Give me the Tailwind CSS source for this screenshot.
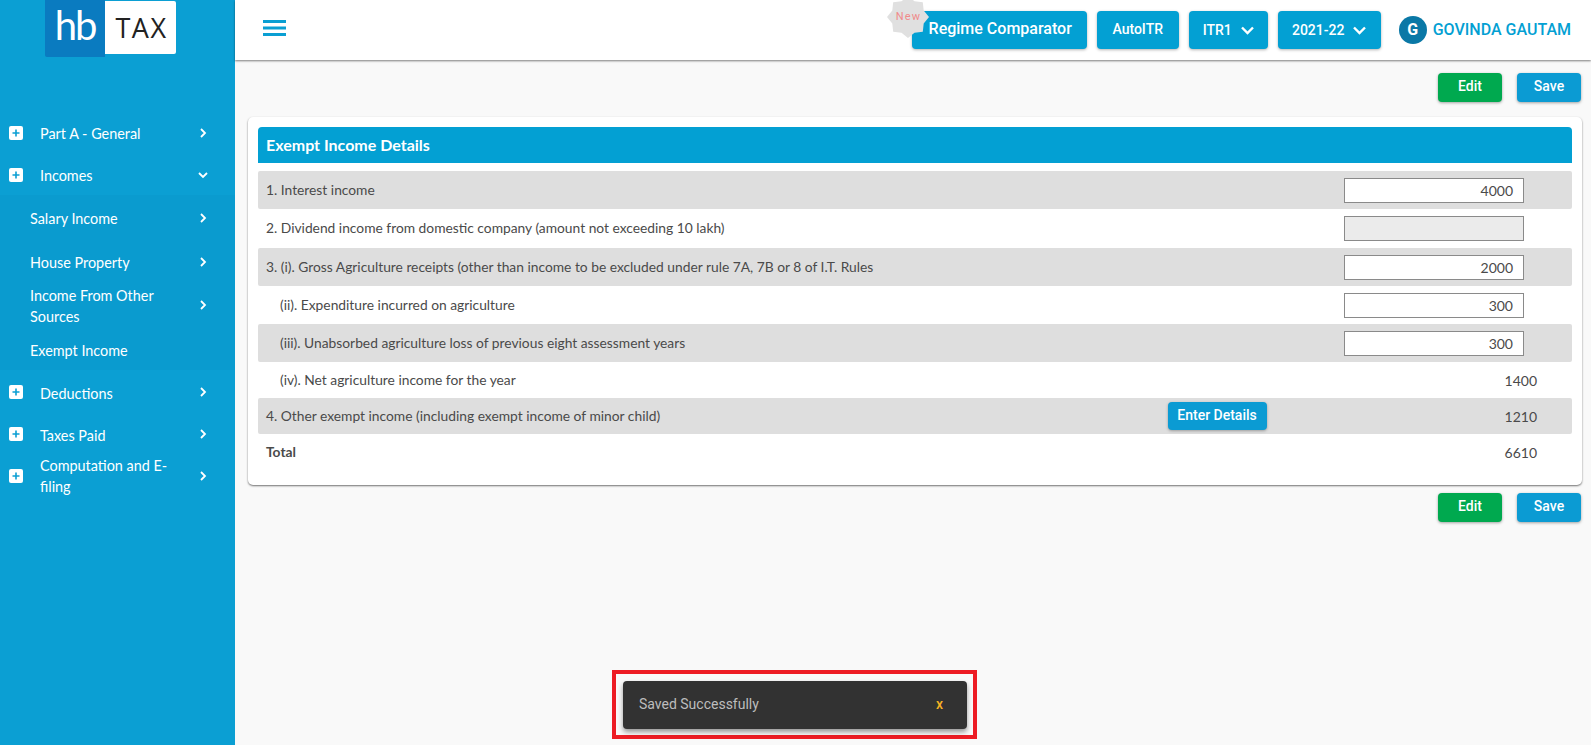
<!DOCTYPE html>
<html>
<head>
<meta charset="utf-8">
<script src="https://cdn.jsdelivr.net/npm/@tailwindcss/browser@4"></script>
</head>
<body class="font-['Lato','Liberation_Sans',sans-serif] bg-[#f9f9f9] overflow-hidden">
<div class="relative flex h-[745px] w-[1591px] overflow-hidden">
  <!-- Sidebar -->
  <aside class="w-[235px] shrink-0 bg-[#0b9fd3] text-white text-[14.4px] leading-[21px]">
    <div class="h-[112px] pl-[45px]">
      <div class="flex items-start">
        <div class="w-[60px] h-[57px] bg-[#0a7bc0] rounded-bl-[2px] flex items-center justify-center text-[40px] leading-none tracking-[-2px] pb-[7px]">hb</div>
        <div class="mt-[1px] w-[71px] h-[53px] bg-white rounded-r-[2px] flex items-center justify-center pl-[2px] text-[27px] leading-none tracking-[1.5px] text-[#222] font-['Open_Sans',sans-serif]">TAX</div>
      </div>
    </div>
    <nav>
      <div class="flex items-center h-[42px] pl-[9px] pr-[27px]">
        <span class="w-[14px] h-[14px] rounded-[2px] bg-white text-[#0b9fd3] flex items-center justify-center"><svg width="8" height="8" viewBox="0 0 8 8"><path d="M4 .5v7M.5 4h7" stroke="currentColor" stroke-width="1.6"/></svg></span>
        <span class="ml-[17px] flex-1 pt-[1px]">Part A - General</span>
        <svg width="10" height="10" viewBox="0 0 10 10" fill="none" stroke="white" stroke-width="1.8"><path d="M3 1l4 4-4 4"/></svg>
      </div>
      <div class="flex items-center h-[42px] pl-[9px] pr-[19px] border-b border-[#0a93c4] mr-[8px] -mb-px">
        <span class="w-[14px] h-[14px] rounded-[2px] bg-white text-[#0b9fd3] flex items-center justify-center"><svg width="8" height="8" viewBox="0 0 8 8"><path d="M4 .5v7M.5 4h7" stroke="currentColor" stroke-width="1.6"/></svg></span>
        <span class="ml-[17px] flex-1 pt-[2px]">Incomes</span>
        <svg width="10" height="10" viewBox="0 0 10 10" fill="none" stroke="white" stroke-width="1.8"><path d="M1 3l4 4 4-4"/></svg>
      </div>
      <div class="bg-[#0a9bcf] pt-[1px]">
        <div class="flex items-center h-[44px] pl-[30px] pr-[27px]"><span class="flex-1">Salary Income</span><svg width="10" height="10" viewBox="0 0 10 10" fill="none" stroke="white" stroke-width="1.8"><path d="M3 1l4 4-4 4"/></svg></div>
        <div class="flex items-center h-[44px] pl-[30px] pr-[27px]"><span class="flex-1">House Property</span><svg width="10" height="10" viewBox="0 0 10 10" fill="none" stroke="white" stroke-width="1.8"><path d="M3 1l4 4-4 4"/></svg></div>
        <div class="flex items-center h-[42px] pl-[30px] pr-[27px]"><span class="flex-1 pt-[1px] leading-[21px]">Income From Other<br>Sources</span><svg width="10" height="10" viewBox="0 0 10 10" fill="none" stroke="white" stroke-width="1.8"><path d="M3 1l4 4-4 4"/></svg></div>
        <div class="flex items-center h-[44px] pt-[4px] pl-[30px] pr-[27px]"><span class="flex-1">Exempt Income</span></div>
      </div>
      <div class="flex items-center h-[42px] mt-[1px] pl-[9px] pr-[27px]">
        <span class="w-[14px] h-[14px] rounded-[2px] bg-white text-[#0b9fd3] flex items-center justify-center"><svg width="8" height="8" viewBox="0 0 8 8"><path d="M4 .5v7M.5 4h7" stroke="currentColor" stroke-width="1.6"/></svg></span>
        <span class="ml-[17px] flex-1 pt-[2px]">Deductions</span>
        <svg width="10" height="10" viewBox="0 0 10 10" fill="none" stroke="white" stroke-width="1.8"><path d="M3 1l4 4-4 4"/></svg>
      </div>
      <div class="flex items-center h-[42px] pl-[9px] pr-[27px]">
        <span class="w-[14px] h-[14px] rounded-[2px] bg-white text-[#0b9fd3] flex items-center justify-center"><svg width="8" height="8" viewBox="0 0 8 8"><path d="M4 .5v7M.5 4h7" stroke="currentColor" stroke-width="1.6"/></svg></span>
        <span class="ml-[17px] flex-1 pt-[2px]">Taxes Paid</span>
        <svg width="10" height="10" viewBox="0 0 10 10" fill="none" stroke="white" stroke-width="1.8"><path d="M3 1l4 4-4 4"/></svg>
      </div>
      <div class="flex items-center h-[42px] pl-[9px] pr-[27px]">
        <span class="w-[14px] h-[14px] rounded-[2px] bg-white text-[#0b9fd3] flex items-center justify-center"><svg width="8" height="8" viewBox="0 0 8 8"><path d="M4 .5v7M.5 4h7" stroke="currentColor" stroke-width="1.6"/></svg></span>
        <span class="ml-[17px] flex-1">Computation and E-<br>filing</span>
        <svg width="10" height="10" viewBox="0 0 10 10" fill="none" stroke="white" stroke-width="1.8"><path d="M3 1l4 4-4 4"/></svg>
      </div>
    </nav>
  </aside>

  <!-- Main -->
  <main class="flex-1 min-w-0">
    <header class="relative h-[60px] bg-white shadow-[0_1px_2px_rgba(0,0,0,0.5)] flex items-center pl-[28px] pr-[20px] font-['Roboto',sans-serif]">
      <svg class="-mt-[4px]" width="23" height="16" viewBox="0 0 23 16" fill="none" stroke="#0a9fd3" stroke-width="3"><path d="M0 1.5h23M0 8h23M0 14.5h23"/></svg>
      <div class="ml-auto flex items-center">
        <div class="relative">
          <button class="h-[38px] w-[175px] pl-[2px] pb-[2px] rounded-[4px] bg-[#03a0d3] text-white text-[16px] font-medium shadow-[0_1px_3px_rgba(0,0,0,0.3)]">Regime Comparator</button>
          <div class="absolute -left-[25px] -top-[15px] w-[42px] h-[42px]">
            <svg class="absolute inset-0" width="42" height="42" viewBox="0 0 42 42"><polygon fill="#e0e0e0" points="42,21 36.7,14.5 35.8,6.2 27.5,5.3 21,0 14.5,5.3 6.2,6.2 5.3,14.5 0,21 5.3,27.5 6.2,35.8 14.5,36.7 21,42 27.5,36.7 35.8,35.8 36.7,27.5"/></svg>
            <span class="absolute left-[9px] top-[14px] text-[11px] leading-[14px] tracking-[1.2px] text-[#f08a8a] font-normal">New</span>
          </div>
        </div>
        <button class="ml-[10px] h-[38px] w-[82px] pb-[2px] rounded-[4px] bg-[#03a0d3] text-white text-[14px] font-medium shadow-[0_1px_3px_rgba(0,0,0,0.3)]">AutoITR</button>
        <button class="ml-[10px] h-[38px] w-[79px] rounded-[4px] bg-[#03a0d3] text-white text-[14px] font-medium shadow-[0_1px_3px_rgba(0,0,0,0.3)] flex items-center justify-center gap-[9px]">ITR1 <svg width="13" height="9" viewBox="0 0 13 9" fill="none" stroke="white" stroke-width="2.4"><path d="M1 1.5l5.5 5.5L12 1.5"/></svg></button>
        <button class="ml-[10px] h-[38px] w-[103px] rounded-[4px] bg-[#03a0d3] text-white text-[14px] font-medium shadow-[0_1px_3px_rgba(0,0,0,0.3)] flex items-center justify-center gap-[9px]">2021-22 <svg width="13" height="9" viewBox="0 0 13 9" fill="none" stroke="white" stroke-width="2.4"><path d="M1 1.5l5.5 5.5L12 1.5"/></svg></button>
        <span class="ml-[18px] w-[28px] h-[28px] rounded-full bg-[#0a78a6] text-white text-[16px] font-bold flex items-center justify-center">G</span>
        <span class="ml-[6px] text-[#03a0d3] text-[16px] font-medium">GOVINDA GAUTAM</span>
      </div>
    </header>

    <div class="flex justify-end gap-[15px] pt-[13px] pr-[10px] font-['Roboto',sans-serif]">
      <button class="h-[29px] w-[64px] pb-[2px] rounded-[4px] bg-[#00a94f] text-white text-[14px] font-medium shadow-[0_1px_3px_rgba(0,0,0,0.35)]">Edit</button>
      <button class="h-[29px] w-[64px] pb-[2px] rounded-[4px] bg-[#0b9bd3] text-white text-[14px] font-medium shadow-[0_1px_3px_rgba(0,0,0,0.35)]">Save</button>
    </div>

    <section class="mt-[15px] ml-[13px] mr-[9px] h-[368px] bg-white rounded-[5px] shadow-[0_1px_2px_rgba(0,0,0,0.55)] px-[10px] pt-[10px] text-[13.8px] text-[#4a4a4a]">
      <h2 class="h-[36px] bg-[#03a0d3] rounded-t-[4px] pl-[8px] flex items-center text-white text-[16px] font-bold">Exempt Income Details</h2>
      <div class="mt-[8px] flex items-center h-[38px] bg-[#dedede] rounded-[2px] pl-[8px]">
        <span class="flex-1">1. Interest income</span>
        <span class="w-[180px] h-[25px] mr-[48px] bg-white border border-[#8a8a8a] flex items-center justify-end pr-[10px] text-[14px]">4000</span>
      </div>
      <div class="flex items-center h-[39px] pl-[8px]">
        <span class="flex-1">2. Dividend income from domestic company (amount not exceeding 10 lakh)</span>
        <span class="w-[180px] h-[25px] mr-[48px] bg-[#ebebeb] border border-[#8a8a8a]"></span>
      </div>
      <div class="flex items-center h-[38px] bg-[#dedede] rounded-[2px] pl-[8px]">
        <span class="flex-1">3. (i). Gross Agriculture receipts (other than income to be excluded under rule 7A, 7B or 8 of I.T. Rules</span>
        <span class="w-[180px] h-[25px] mr-[48px] bg-white border border-[#8a8a8a] flex items-center justify-end pr-[10px] text-[14px]">2000</span>
      </div>
      <div class="flex items-center h-[38px] pl-[22px]">
        <span class="flex-1">(ii). Expenditure incurred on agriculture</span>
        <span class="w-[180px] h-[25px] mr-[48px] bg-white border border-[#8a8a8a] flex items-center justify-end pr-[10px] text-[14px]">300</span>
      </div>
      <div class="flex items-center h-[38px] bg-[#dedede] rounded-[2px] pl-[22px]">
        <span class="flex-1">(iii). Unabsorbed agriculture loss of previous eight assessment years</span>
        <span class="w-[180px] h-[25px] mr-[48px] bg-white border border-[#8a8a8a] flex items-center justify-end pr-[10px] text-[14px]">300</span>
      </div>
      <div class="flex items-center h-[36px] pl-[22px] pr-[35px]">
        <span class="flex-1">(iv). Net agriculture income for the year</span>
        <span class="text-[14px]">1400</span>
      </div>
      <div class="flex items-center h-[36px] bg-[#dedede] rounded-[2px] pl-[8px] pr-[35px]">
        <span class="flex-1">4. Other exempt income (including exempt income of minor child)</span>
        <button class="mr-[238px] mb-[1px] h-[28px] w-[99px] rounded-[4px] bg-[#0b9bd3] text-white text-[14px] font-medium font-['Roboto',sans-serif] shadow-[0_1px_3px_rgba(0,0,0,0.3)]">Enter Details</button>
        <span class="text-[14px]">1210</span>
      </div>
      <div class="flex items-center h-[36px] pl-[8px] pr-[35px]">
        <span class="flex-1 font-bold">Total</span>
        <span class="text-[14px]">6610</span>
      </div>
    </section>

    <div class="flex justify-end gap-[15px] pt-[8px] pr-[10px] font-['Roboto',sans-serif]">
      <button class="h-[29px] w-[64px] pb-[2px] rounded-[4px] bg-[#00a94f] text-white text-[14px] font-medium shadow-[0_1px_3px_rgba(0,0,0,0.35)]">Edit</button>
      <button class="h-[29px] w-[64px] pb-[2px] rounded-[4px] bg-[#0b9bd3] text-white text-[14px] font-medium shadow-[0_1px_3px_rgba(0,0,0,0.35)]">Save</button>
    </div>
  </main>

  <!-- Toast with annotation -->
  <div class="absolute left-[612px] top-[670px] w-[365px] h-[69px] border-[4px] border-[#ed1c24] pl-[7px] pt-[7px] font-['Roboto',sans-serif]">
    <div class="w-[344px] h-[48px] rounded-[4px] bg-[#323232] shadow-[0_3px_5px_rgba(0,0,0,0.4)] flex items-center justify-between pl-[16px] pr-[24px] pb-[2px]">
      <span class="text-[14px] text-[#bdbdbd]">Saved Successfully</span>
      <span class="text-[14px] font-medium text-[#f5b324]">x</span>
    </div>
  </div>
</div>
</body>
</html>
